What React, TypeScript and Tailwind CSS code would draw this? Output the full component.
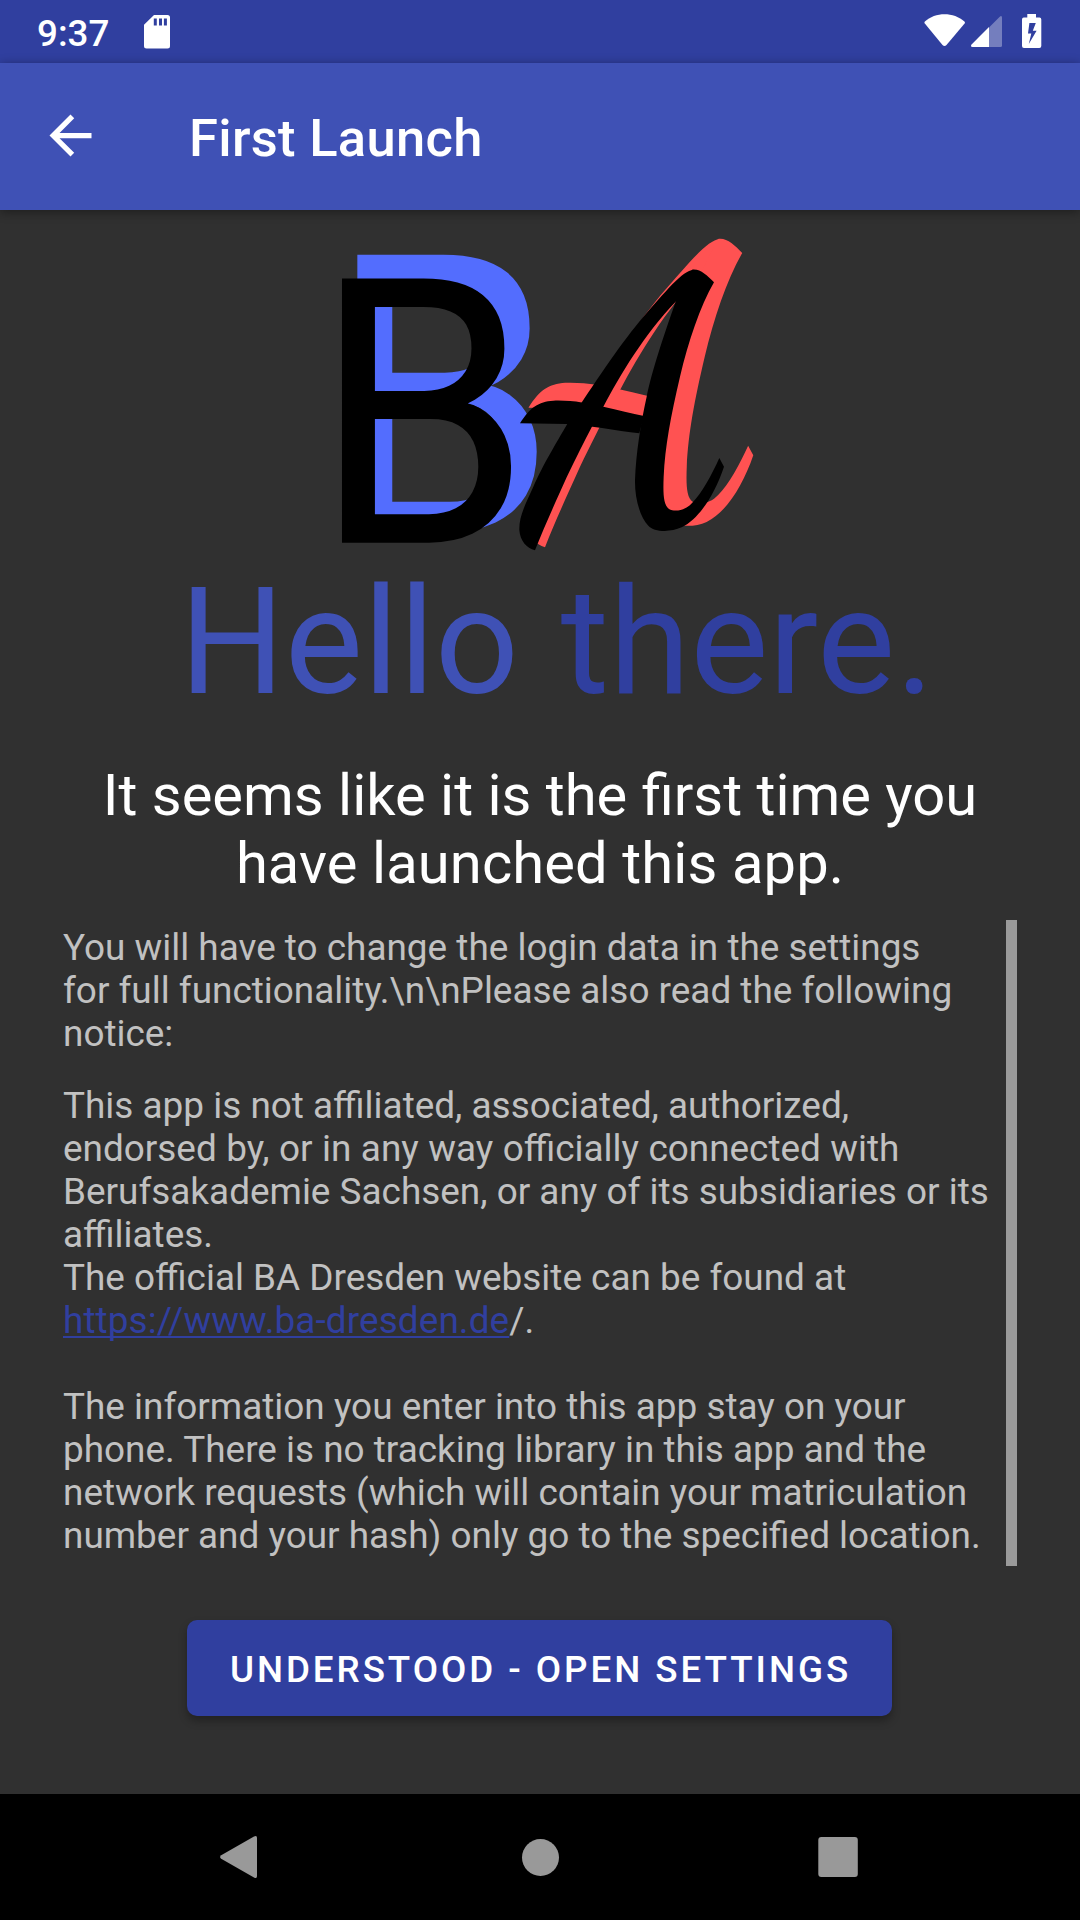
import React from "react";

function StatusBar() {
  return (
    <div className="flex h-[63px] shrink-0 items-center justify-between bg-[#303f9f] text-white">
      <div className="flex items-center">
        <span className="w-[107px] pl-[37px] pt-[3px] text-[36.75px] font-medium leading-[43px]">9:37</span>
        <svg className="ml-[36.5px]" width="26" height="34" viewBox="0 0 26 34" fill="currentColor">
          <path
            fillRule="evenodd"
            d="M10 0H23.5Q26 0 26 2.5V31Q26 33.5 23.5 33.5H2.5Q0 33.5 0 31V9.8ZM9.8 3.4V10.6H12.8V3.4ZM15 3.4V10.6H18V3.4ZM19.9 3.4V10.6H22.9V3.4Z"
          />
        </svg>
      </div>
      <svg width="156" height="63" viewBox="924 0 156 63" fill="currentColor">
        <path d="M924.6 21.8C935.5 11.9 953.5 11.9 964.7 21.8L965 23L946.5 45Q944.5 46.8 942.5 45L924.4 23Z" />
        <path fillOpacity="0.33" d="M989 27.5L999.5 17Q1002 14.8 1002 18V45.5Q1002 47 1000.5 47H989Z" />
        <path d="M989 27V47H972.5Q970.3 47 971.3 44.8Z" />
        <path
          fillRule="evenodd"
          d="M1027.3 14H1036V17.6H1039.5Q1041.3 17.6 1041.3 19.4V46Q1041.3 48 1039.3 48H1024Q1022 48 1022 46V19.4Q1022 17.6 1023.8 17.6H1027.3ZM1029.4 23L1028 33.5H1031.3L1028.8 44L1036.6 30.8H1032.8L1035.8 23Z"
        />
      </svg>
    </div>
  );
}

function AppBar() {
  return (
    <header className="z-10 flex h-[147px] shrink-0 items-center bg-[#3f51b5] pl-[39px] text-white shadow-[0_2px_10px_rgba(0,0,0,0.4)]">
      <svg className="mb-[2px]" width="63" height="63" viewBox="0 0 24 24" fill="currentColor">
        <path d="M20 11H7.83l5.59-5.59L12 4l-8 8 8 8 1.41-1.41L7.83 13H20v-2z" />
      </svg>
      <h1 className="ml-[87px] pt-[3px] text-[52.5px] font-medium leading-[62px] tracking-[0.3px]">First Launch</h1>
    </header>
  );
}

/* Calligraphic strokes: two legs and the crossbar */
function Swash() {
  return (
    <>
      <path d="M580 149C548 152 500 210 420 302C350 388 290 480 200 615C150 700 125 745 100 800C75 855 57 890 58 930C60 962 80 985 105 991C135 915 165 850 200 772C230 710 255 660 275 622L310 560C360 465 435 340 527 245L600 220Z" />
      <path d="M527 245C490 350 455 455 440 530C422 610 408 700 405 780C404 830 418 890 445 917C462 936 510 938 545 922C600 895 645 820 672 740L658 714C635 765 605 820 577 848C555 872 525 877 507 867C490 855 489 820 491 770C495 680 512 590 540 470C565 365 600 260 642 187C620 165 600 145 576 149Z" />
      <path d="M60 610C90 562 115 545 160 542C215 540 265 550 310 560C355 570 395 580 432 588L418 640C350 632 260 615 200 612Z" />
    </>
  );
}

function LetterB() {
  return (
    <text
      transform="translate(-20.5 968) scale(0.94 1)"
      fontSize="1115"
      fontFamily="Roboto, sans-serif"
      fill="currentColor"
    >
      B
    </text>
  );
}

function Logo() {
  return (
    <svg className="ml-[330px] overflow-visible" width="430" height="330" viewBox="330 230 430 330" aria-label="BA">
      <g transform="translate(320 220) scale(0.33333)">
        <g transform="matrix(1.061 0 0 1.048 42 -79.4)" color="#536dfe">
          <LetterB />
        </g>
        <g color="#000000">
          <LetterB />
        </g>
      </g>
      <g transform="translate(500 220) scale(0.33333)">
        <g transform="matrix(1.102 0 0 1.098 19.3 -106.6)" fill="#ff5252">
          <Swash />
        </g>
        <g fill="#000000">
          <Swash />
        </g>
      </g>
    </svg>
  );
}

function Notice() {
  return (
    <div className="ml-[63px] mr-[63px] mt-[23px] flex h-[646px] justify-between text-[36.92px] leading-[43px] text-[#c1c1c1]">
      <div className="whitespace-nowrap pt-[6px]">
        <p>
          You will have to change the login data in the settings
          <br />
          for full functionality.\n\nPlease also read the following
          <br />
          notice:
        </p>
        <p className="mt-[29px]">
          This app is not affiliated, associated, authorized,
          <br />
          <span className="[word-spacing:0.3px]">endorsed by, or in any way officially connected with</span>
          <br />
          Berufsakademie Sachsen, or any of its subsidiaries or its
          <br />
          affiliates.
          <br />
          The official BA Dresden website can be found at
          <br />
          <a
            className="tracking-[0.1px] text-[#303f9f] underline decoration-2 underline-offset-[3px] [text-decoration-skip-ink:none]"
            href="#"
          >
            https://www.ba-dresden.de
          </a>
          /.
          <br />
          <br />
          The information you enter into this app stay on your
          <br />
          phone. There is no tracking library in this app and the
          <br />
          network requests (which will contain your matriculation
          <br />
          number and your hash) only go to the specified location.
        </p>
      </div>
      <div className="w-[11px] shrink-0 bg-[#9a9a9a]" />
    </div>
  );
}

function NavBar() {
  return (
    <nav className="flex h-[126px] shrink-0 items-center bg-black text-[#999999]">
      <svg width="1080" height="126" viewBox="0 1794 1080 126" fill="currentColor">
        <path d="M254 1836.5Q257 1834.8 257 1838V1876Q257 1879.2 254 1877.5L221.2 1858.8Q219 1857 221.2 1855.2Z" />
        <circle cx="540.5" cy="1857.5" r="18.5" />
        <rect x="818.3" y="1837" width="39.5" height="40" rx="3" />
      </svg>
    </nav>
  );
}

export default function App() {
  return (
    <div className="flex h-[1920px] w-[1080px] flex-col overflow-hidden bg-[#303030] font-['Roboto',sans-serif]">
      <StatusBar />
      <AppBar />
      <main className="flex flex-1 flex-col pt-[20px]">
        <Logo />
        <div className="-mt-[3px] flex h-[172px] gap-[5px] whitespace-pre pl-[179.5px] text-[147.6px] leading-[172px]">
          <span className="text-[#3f51b5]">Hello </span>
          <span className="text-[#303f9f]">there.</span>
        </div>
        <h2 className="mt-[33px] text-center text-[57.9px] leading-[67.7px] text-white">
          It seems like it is the first time you
          <br />
          <span className="tracking-[0.1px]">have launched this app.</span>
        </h2>
        <Notice />
        <button className="ml-[187px] mt-[54px] h-[96px] w-[705px] rounded-[10px] bg-[#303f9f] pl-[2px] pt-[2px] text-[36.75px] font-medium tracking-[2.95px] text-white shadow-[0_5px_8px_rgba(0,0,0,0.3)]">
          UNDERSTOOD - OPEN SETTINGS
        </button>
      </main>
      <NavBar />
    </div>
  );
}
